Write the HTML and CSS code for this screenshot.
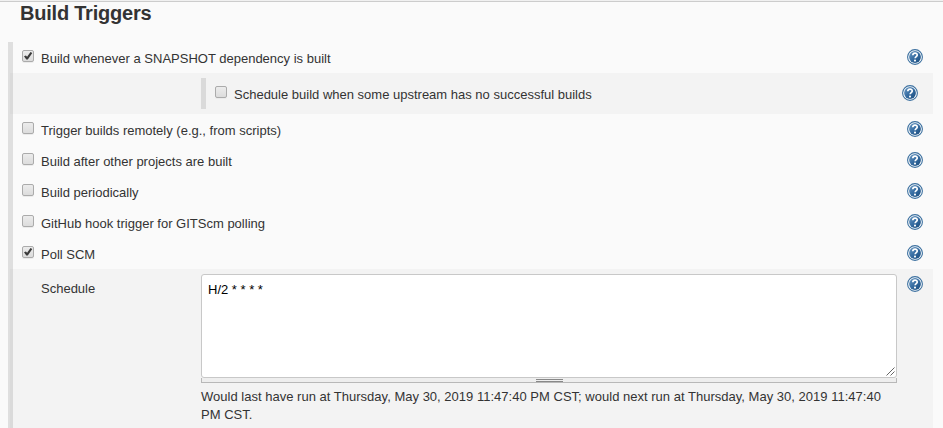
FILE: index.html
```
<!DOCTYPE html>
<html lang="en">
<head>
<meta charset="utf-8">
<title>Build Triggers</title>
<link rel="stylesheet" href="styles.css">
</head>
<body>
<svg width="0" height="0" class="defs">
  <defs>
    <linearGradient id="blue" x1="0" y1="0" x2="1" y2="1"><stop offset="0" stop-color="#6f9cc4"/><stop offset=".45" stop-color="#3a70a5"/><stop offset="1" stop-color="#174a7c"/></linearGradient>
    <symbol id="help" viewBox="0 0 16 16">
      <circle cx="8" cy="8" r="7.4" fill="#fff" stroke="#3c709f" stroke-width="1.1"/>
      <circle cx="8" cy="8" r="5.9" fill="url(#blue)"/>
      <path d="M5.8 6.3C5.9 3.3 10.4 3.5 10.2 6.1C10.1 7.5 8.2 7.7 8.1 9.3" fill="none" stroke="#fff" stroke-width="1.7"/>
      <circle cx="8" cy="11.6" r="1.05" fill="#fff"/>
    </symbol>
    <symbol id="check" viewBox="0 0 12 12"><path d="M2 6.3L3.9 5.4L5.1 6.7L8.5 2L10.3 2.9L5.8 9.6H4.3Z" fill="#3b3b3b"/></symbol>
  </defs>
</svg>
<h1 class="title">Build Triggers</h1>
<main class="triggers">
  <div class="row"><span class="box"><svg><use href="#check"/></svg></span><span class="label">Build whenever a SNAPSHOT dependency is built</span><svg class="help"><use href="#help"/></svg></div>
  <div class="row nested">
    <div class="inner"><span class="box"></span><span class="label">Schedule build when some upstream has no successful builds</span><svg class="help"><use href="#help"/></svg></div>
  </div>
  <div class="row"><span class="box"></span><span class="label">Trigger builds remotely (e.g., from scripts)</span><svg class="help"><use href="#help"/></svg></div>
  <div class="row"><span class="box"></span><span class="label">Build after other projects are built</span><svg class="help"><use href="#help"/></svg></div>
  <div class="row"><span class="box"></span><span class="label">Build periodically</span><svg class="help"><use href="#help"/></svg></div>
  <div class="row"><span class="box"></span><span class="label">GitHub hook trigger for GITScm polling</span><svg class="help"><use href="#help"/></svg></div>
  <div class="row"><span class="box"><svg><use href="#check"/></svg></span><span class="label">Poll SCM</span><svg class="help"><use href="#help"/></svg></div>
  <div class="row schedule">
    <span class="name">Schedule</span>
    <div class="field">
      <div class="area">H/2 * * * *<svg class="grip" viewBox="0 0 9 9"><path d="M.5 8.5L8.5 .5M4.5 8.5L8.5 4.5" stroke="#666" stroke-width="1"/></svg></div>
      <div class="handle"><span></span></div>
      <p class="note">Would last have run at Thursday, May 30, 2019 11:47:40 PM CST; would next run at Thursday, May 30, 2019 11:47:40<br>PM CST.</p>
    </div>
    <svg class="help"><use href="#help"/></svg>
  </div>
</main>
</body>
</html>
```
FILE: styles.css
```
* { box-sizing: border-box; }
body {
  margin: 0;
  height: 428px;
  overflow: hidden;
  background: linear-gradient(#f0f0f0 0 1px, #ccc 1px 2px, #fafafa 2px);
  color: #333;
  font: 13px/18px "Liberation Sans", Arial, sans-serif;
}
.defs { position: absolute; }
.title {
  margin: 0;
  height: 42px;
  padding: 1px 0 0 20px;
  font-size: 20px;
  line-height: 24px;
  letter-spacing: -.22px;
}
.triggers { width: 925px; margin-left: 8px; border-left: 5px solid #dfdfdf; }
.row { display: flex; align-items: flex-start; height: 31px; padding: 7px 10px 0 9px; }
.box {
  flex: none;
  width: 12px;
  height: 12px;
  margin-top: 1px;
  border: 1px solid #ababab;
  border-radius: 2px;
  background: linear-gradient(#ececec, #dcdcdc);
  box-shadow: 0 1px 0 #ebebeb;
}
.box svg { display: block; width: 12px; height: 12px; margin: -1px; }
.label { margin: 1px 0 0 7px; white-space: nowrap; }
.help { flex: none; width: 16px; height: 16px; margin-left: auto; }
.nested { height: 41px; padding: 5px 15px 0 188px; background: #f3f3f3; }
.nested, .schedule { box-shadow: -3px 0 0 #dadada; }
.inner { display: flex; align-items: flex-start; flex: 1; height: 31px; margin-right: 8px; padding: 7px 0 0 9px; border-left: 5px solid #dadada; }
.inner .help { margin-right: -8px; }
.schedule { height: 160px; padding-top: 5px; padding-left: 28px; background: #f3f3f3; }
.name { width: 160px; padding-top: 6px; }
.field { width: 696px; }
.area {
  position: relative;
  height: 104px;
  padding: 6px;
  border: 1px solid #c8c8c8;
  border-radius: 3px;
  background: #fff;
  color: #000;
}
.grip { position: absolute; right: 1px; bottom: 1px; width: 9px; height: 9px; }
.handle {
  height: 5px;
  padding-top: 1px;
  border: solid #b8b8b8;
  border-width: 0 1px 1px;
  background: #eee;
}
.handle span { display: block; width: 27px; height: 3px; margin: 0 auto; border: solid #888; border-width: 1px 0; }
.note { margin: 5px 0 0; letter-spacing: .014px; white-space: nowrap; }
.schedule .help { margin-top: 2px; }
```
